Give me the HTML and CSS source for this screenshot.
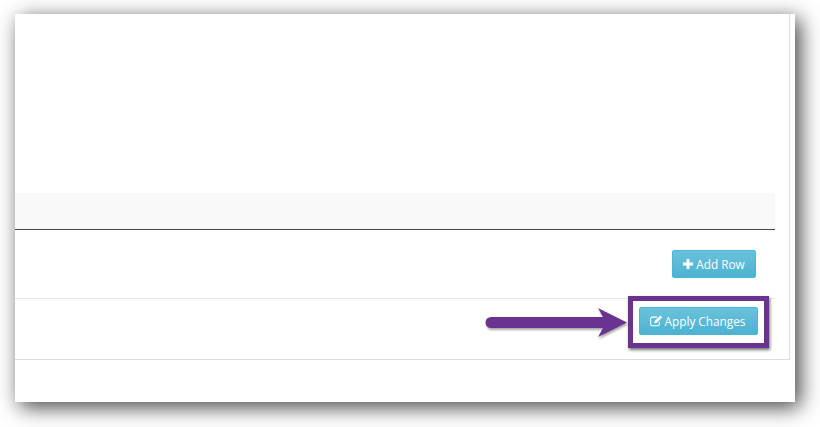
FILE: index.html
```html
<!DOCTYPE html>
<html lang="en">
<head>
  <meta charset="UTF-8">
  <title>Apply Changes</title>
  <link rel="stylesheet" href="styles.css">
</head>
<body>
  <div class="window">
    <div class="panel">
      <div class="blank"></div>
      <div class="table-head"></div>
      <div class="add-row">
        <button class="btn add-btn">
          <svg class="icon" width="10" height="10" viewBox="0 0 10 10"><path d="M3.600 0h2.800v3.600H10v2.800H6.400V10H3.600V6.400H0V3.600h3.600z" fill="#fff"/></svg>
          Add Row
        </button>
      </div>
      <div class="apply-row">
        <button class="btn apply-btn">
          <svg class="icon" width="13" height="12" viewBox="0 0 12 11"><path d="M8.600 6.300v2.200c0 .8-.6 1.400-1.400 1.400H2c-.8 0-1.400-.6-1.400-1.400V3.300c0-.8.6-1.400 1.400-1.400h4.600" fill="none" stroke="#fff" stroke-width="1"/><path d="M4.200 5.600 9.600.4l1.700 1.700-5.200 5.200-2.200.5z" fill="#fff"/></svg>
          Apply Changes
        </button>
      </div>
    </div>
    <div class="highlight"></div>
    <svg class="arrow" width="146" height="46" viewBox="0 0 146 46">
      <path d="M7 17H119L114 8 143 22.500 114 37 119 28H7a5.500 5.500 0 0 1 0-11z" fill="#6b3390"/>
    </svg>
  </div>
</body>
</html>
```

FILE: styles.css
```css
html, body {
  margin: 0;
  height: 100%;
  background: #fff;
  overflow: hidden;
}
body {
  font-family: "Open Sans", "Liberation Sans", sans-serif;
}
.window {
  position: relative;
  width: 780px;
  height: 388px;
  margin: 14px 0 0 15px;
  background: #fff;
  box-shadow: 5px 5px 20px rgba(0, 0, 0, 0.75);
}
.panel {
  width: 774px;
  height: 345px;
  border-right: 1px solid #ddd;
  border-bottom: 1px solid #ddd;
}
.blank {
  height: 179px;
}
.table-head {
  width: 760px;
  height: 36px;
  background: #f9f9f9;
  border-bottom: 1px solid #444;
}
.add-row {
  display: flex;
  justify-content: flex-end;
  width: 760px;
  height: 69px;
  padding: 20px 19px 0 0;
  box-sizing: border-box;
  border-bottom: 1px solid #e8e8e8;
}
.apply-row {
  display: flex;
  justify-content: flex-end;
  width: 743px;
  padding-top: 8px;
}
.btn {
  display: flex;
  align-items: center;
  justify-content: center;
  gap: 3px;
  height: 28px;
  padding: 0;
  border: 1px solid #46b8da;
  border-radius: 2px;
  background: linear-gradient(#6ac2db, #4db2d1);
  color: #fff;
  font-family: inherit;
  font-size: 11.8px;
  font-weight: 400;
}
.add-btn {
  width: 84px;
}
.apply-btn {
  width: 119px;
  gap: 2px;
  padding-right: 2px;
}
.highlight {
  position: absolute;
  left: 613px;
  top: 282px;
  width: 131px;
  height: 42px;
  border: 5px solid #6b3390;
  box-shadow: 1px 2px 3px rgba(0, 0, 0, 0.55);
}
.arrow {
  position: absolute;
  left: 469px;
  top: 286px;
  filter: drop-shadow(1px 2px 1px rgba(0, 0, 0, 0.35));
}
```
